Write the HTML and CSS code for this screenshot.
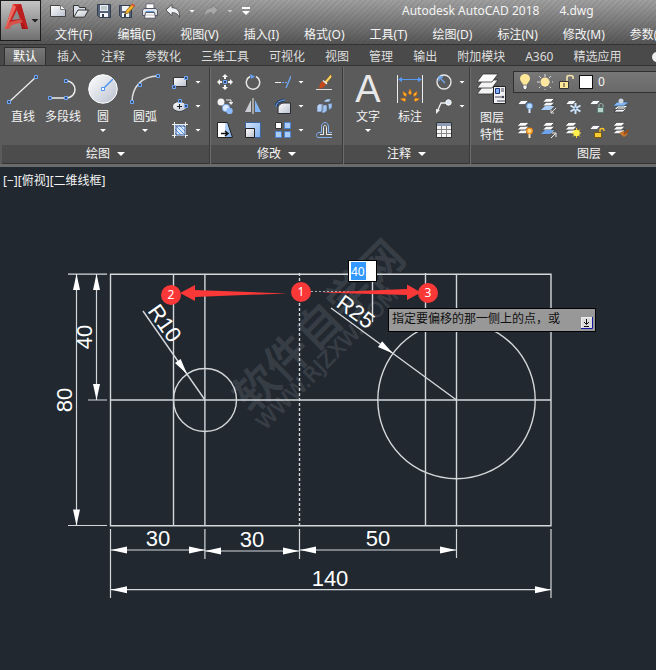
FILE: index.html
```html
<!DOCTYPE html>
<html lang="zh-CN">
<head>
<meta charset="utf-8">
<title>Autodesk AutoCAD 2018 - 4.dwg</title>
<link rel="stylesheet" href="styles.css">
</head>
<body>
<svg class="defs" aria-hidden="true">
  <defs>
    <linearGradient id="steel" x1="0" y1="0" x2="1" y2="1"><stop offset="0" stop-color="#fff"/><stop offset="1" stop-color="#b9c0ce"/></linearGradient>
    <linearGradient id="sky" x1="0" y1="0" x2="1" y2="1"><stop offset="0" stop-color="#d6e6fa"/><stop offset="1" stop-color="#7fb0ee"/></linearGradient>
    <linearGradient id="crimson" x1="0" y1="0" x2="1" y2="1"><stop offset="0" stop-color="#e8342f"/><stop offset="1" stop-color="#9c1012"/></linearGradient>
    <symbol id="sheet" viewBox="0 0 12 5"><path d="M4 .5h7.500L8 4.500H.5z" fill="#f4f6f9" stroke="#333" stroke-width=".6"/></symbol>
    <symbol id="stack" viewBox="0 0 16 16"><path d="M5 9.500h9l-4 4H1z" fill="#f4f6f9" stroke="#333" stroke-width=".7"/><path d="M5 5.500h9l-4 4H1z" fill="#f4f6f9" stroke="#333" stroke-width=".7"/><path d="M5 1.500h9l-4 4H1z" fill="#fff" stroke="#333" stroke-width=".7"/></symbol>
    <symbol id="grip" viewBox="0 0 4 4"><path d="M.5.5h3v3h-3z" fill="#3d4c66" stroke="#6fa8ff"/></symbol>
  </defs>
</svg>

<header class="titlebar">
  <button class="app" aria-label="应用程序菜单">
    <svg width="24" height="28" viewBox="0 0 24 28"><path d="M8 1h8l7 25h-6l-2-7-10 2-1 5H0z" fill="url(#crimson)"/><path d="M8 1l3 3-9 20-2 2z" fill="#ef6a60"/><path d="M12 7l3 9-8 1z" fill="#8c8c8c"/><path d="M0 26l5-7 12-3 2 3-12 3-3 4z" fill="#d5534b"/><path d="M16 1l7 25-3-1L11 4z" fill="#bb1f20"/></svg>
    <i class="caret dark"></i>
  </button>
  <div class="bars">
    <div class="quick">
      <button aria-label="新建"><svg width="16" height="16"><path d="M.5 2.500h10l5 4v7H.5z" fill="url(#steel)" stroke="#444"/><path d="M10.500 2.500v4h5" fill="#fff" stroke="#777"/></svg></button>
      <button aria-label="打开"><svg width="16" height="16"><path d="M.5 14V2.500h5l1 2h6V7" fill="#dce2eb" stroke="#333"/><path d="M.8 14.200L5 7h10.500l-4 7.200z" fill="url(#steel)" stroke="#333"/></svg></button>
      <button aria-label="保存"><svg width="16" height="16"><path d="M1.500 1.500h13v13h-11l-2-2z" fill="#56627a" stroke="#333e50"/><path d="M4 2h8v6H4z" fill="#e9edf4"/><path d="M5 4h6M5 6h6" stroke="#9aa"/><path d="M4 10h8v4H4z" fill="#f3f5f8"/><path d="M6 11h2v3H6z" fill="#333e50"/></svg></button>
      <button aria-label="另存为"><svg width="16" height="16"><path d="M.5 2.500h12v12h-10l-2-2z" fill="#56627a" stroke="#333e50"/><path d="M3 3h7v5H3zM3 10h7v4H3z" fill="#f0f3f7"/><path d="M5 11h2v3H5z" fill="#333e50"/><path d="M6 11l1-3 6-7 2.500 2-6 7z" fill="#f7b52c" stroke="#7b5011" stroke-width=".7"/><path d="M12 2l1.500-1.500L16 2.500 14.500 4z" fill="#dd5534"/></svg></button>
      <button aria-label="打印"><svg width="16" height="16"><path d="M4 6V.8h8V6z" fill="#fff" stroke="#667"/><path d="M2 5.500h12l1.500 2v5H.5v-5z" fill="#dfe4eb" stroke="#556"/><path d="M3.500 9.500h9l1 5.700h-11z" fill="#fff" stroke="#556"/><path d="M4 8.500h8" stroke="#5d9bdc"/><path d="M4 12h8" stroke="#bbb"/></svg></button>
      <button aria-label="放弃"><svg width="16" height="16"><path d="M.8 7L7 1.500v3.200c5 0 8 3 7.500 10-2-4.500-4-5-7.500-5v3.200z" fill="#eef1f5" stroke="#555"/></svg></button>
      <button aria-label="放弃列表"><i class="caret"></i></button>
      <button aria-label="重做"><svg width="16" height="16"><path d="M15.200 7L9 1.500v3.200c-5 0-8 3-7.500 10 2-4.500 4-5 7.500-5v3.200z" fill="#a8a8a8" stroke="#808080"/></svg></button>
      <button aria-label="重做列表"><i class="caret faint"></i></button>
      <button aria-label="自定义"><svg width="10" height="8"><path d="M1 1h8" stroke="#fff" stroke-width="2"/><path d="M1 4h8L5 8z" fill="#fff"/></svg></button>
      <h1><span>Autodesk AutoCAD 2018</span><span>4.dwg</span></h1>
    </div>
    <nav class="menu">
      <button>文件(F)</button><button>编辑(E)</button><button>视图(V)</button><button>插入(I)</button><button>格式(O)</button><button>工具(T)</button><button>绘图(D)</button><button>标注(N)</button><button>修改(M)</button><button>参数(P)</button>
    </nav>
  </div>
</header>

<nav class="tabs">
  <button class="active">默认</button><button>插入</button><button>注释</button><button>参数化</button><button>三维工具</button><button>可视化</button><button>视图</button><button>管理</button><button>输出</button><button>附加模块</button><button>A360</button><button>精选应用</button>
  <button class="more" aria-label="显示选项"><i></i></button>
</nav>

<main class="ribbon">
  <section class="panel">
    <div class="body">
      <button class="big"><svg width="32" height="32"><path d="M2 29L29 4" stroke="#eee" stroke-width="1.300"/><use href="#grip" x="0" y="27" width="4" height="4"/><use href="#grip" x="27" y="2" width="4" height="4"/></svg><span>直线</span></button>
      <button class="big"><svg width="32" height="32"><path d="M3 25h16c12 0 12-17 0-17" fill="none" stroke="#eee" stroke-width="1.500"/><use href="#grip" x="1" y="23" width="4" height="4"/><use href="#grip" x="17" y="23" width="4" height="4"/><use href="#grip" x="17" y="6" width="4" height="4"/></svg><span>多段线</span></button>
      <button class="big"><svg width="32" height="32"><circle cx="16" cy="16" r="14.300" fill="url(#steel)" stroke="#fff"/><path d="M16 16L26 6" stroke="#4d94f2" stroke-width="1.500"/><path d="M14.500 14.500h3v3h-3z" fill="#fff" stroke="#4d94f2"/></svg><span>圆</span><i class="caret"></i></button>
      <button class="big wide"><svg width="32" height="32"><path d="M3 29C3 14 13 3 29 3" fill="none" stroke="#ddd" stroke-width="1.500"/><use href="#grip" x="1" y="27" width="4" height="4"/><use href="#grip" x="9" y="10" width="4" height="4"/><use href="#grip" x="27" y="1" width="4" height="4"/></svg><span>圆弧</span><i class="caret"></i></button>
      <div class="tools">
        <button aria-label="矩形"><svg width="16" height="16"><path d="M1.500 3.500h13v9h-13z" fill="url(#steel)" stroke="#333"/><use href="#grip" x="0" y="11" width="4" height="4"/><use href="#grip" x="12" y="2" width="4" height="4"/></svg><i class="caret"></i></button>
        <button aria-label="椭圆"><svg width="16" height="16"><ellipse cx="7.500" cy="8.500" rx="7" ry="5" fill="url(#steel)" stroke="#444"/><path d="M5 8.500h5M7.500 6v5" stroke="#222"/><use href="#grip" x="6" y="1" width="4" height="4"/><use href="#grip" x="12" y="6" width="4" height="4"/></svg><i class="caret"></i></button>
        <button aria-label="图案填充"><svg width="16" height="16"><path d="M3 3h10v10H3z" fill="#d9e7fb"/><path d="M3 7l6 6M3 3l10 10M7 3l6 6M3 11l2 2M11 3l2 2" stroke="#5c97eb"/><path d="M2.500 0v16M13.500 0v16M0 2.500h16M0 13.500h16" stroke="#eee"/><path d="M4 4h9v9H4z" fill="none" stroke="#3c5a91"/></svg><i class="caret"></i></button>
      </div>
    </div>
    <h2>绘图<i class="caret large"></i></h2>
  </section>

  <section class="panel">
    <div class="body">
      <div class="tools modify">
        <button aria-label="移动"><svg width="16" height="16"><path d="M8 0l3 3H9v2H7V3H5zM8 16l3-3H9v-2H7v2H5zM0 8l3-3v2h2v2H3v2zM16 8l-3-3v2h-2v2h2v2z" fill="#f4f4f4"/><path d="M6.500 6.500h3v3h-3z" fill="#346" stroke="#6fa8ff"/></svg></button>
        <button aria-label="旋转"><svg width="16" height="16"><path d="M5 2.500a6.700 6.700 0 1 0 6 0" fill="none" stroke="#e5e5e5" stroke-width="1.500"/><path d="M5 0l5 2.500L6 5z" fill="#66a2f5"/></svg></button>
        <button aria-label="修剪"><svg width="16" height="16"><path d="M0 8.500h6" stroke="#eee"/><path d="M7 8.500h5" stroke="#70a8f5" stroke-dasharray="2 1"/><path d="M11 14L16 2" stroke="#70a8f5" stroke-width="1.300"/></svg><i class="caret"></i></button>
        <button aria-label="删除"><svg width="16" height="16"><path d="M0 15.500h16" stroke="#ddd"/><path d="M8 8l7-8 1 3-6 7z" fill="#f8d264" stroke="#63451d" stroke-width=".6"/><path d="M6 7l4 3-2 3-5 2 1-5z" fill="#c74818"/><path d="M7 6.500l4 3.500" stroke="#eee" stroke-width="1.500"/></svg></button>
        <button aria-label="复制"><svg width="16" height="16"><circle cx="4" cy="4" r="3.500" fill="#f4f4f4"/><circle cx="9" cy="10" r="3.700" fill="#dcebff" stroke="#76a5e3"/><circle cx="12.500" cy="13" r="3.200" fill="#8cbafa"/><path d="M9 2h5v3" fill="none" stroke="#eee"/><path d="M11.500 4h5L14 7z" fill="#eee"/></svg></button>
        <button aria-label="镜像"><svg width="16" height="16"><path d="M6 2v12H0z" fill="#c9ccd2"/><path d="M10 2v12h6z" fill="#82b3f2"/><path d="M8 0v16" stroke="#eee"/></svg></button>
        <button aria-label="圆角"><svg width="16" height="16"><path d="M3 15.500V11c0-4 3-6 6-6h6.500v10.500z" fill="url(#steel)" stroke="#292d35"/><path d="M1 9c0-4 4-7 9-7" fill="none" stroke="#283f64" stroke-width="3"/><path d="M1 9c0-4 4-7 9-7" fill="none" stroke="#75aef8"/></svg><i class="caret"></i></button>
        <button aria-label="分解"><svg width="16" height="16"><path d="M1 8l2-2h4v6l-2 2H1zM8 3l3-2h4l-2 3H8zM6 7h5v6l-3 2H6zM12 6l4-1v5l-3 2z" fill="url(#sky)" stroke="#55606f" stroke-width=".6"/></svg></button>
        <button aria-label="拉伸"><svg width="16" height="16"><path d="M.5.5h10l5 15H.5z" fill="url(#sky)" stroke="#222"/><path d="M1 1h7v14H1z" fill="#fff"/><path d="M4 11.500h6M8 9l3 2.500L8 14" fill="none" stroke="#111" stroke-width="1.500"/></svg></button>
        <button aria-label="缩放"><svg width="16" height="16"><path d="M.5.5h15v15H.5z" fill="url(#sky)" stroke="#3b66a5"/><path d="M.5 6.500h9v9h-9z" fill="url(#steel)" stroke="#222"/></svg></button>
        <button aria-label="阵列"><svg width="16" height="16"><path d="M.5.5h6v6h-6z" fill="#fff" stroke="#333"/><path d="M9.500.5h6v6h-6zM.5 9.500h6v6h-6zM9.500 9.500h6v6h-6z" fill="#a9ccfa" stroke="#4c83d0"/></svg><i class="caret"></i></button>
        <button aria-label="偏移"><svg width="16" height="16"><path d="M16 15.500H2c-2 0-2-5 1-5h2.500V5c0-6 7-6 7 0v5.500H16" fill="none" stroke="#81b2f6"/><path d="M16 12.500h-5.500V5.500c0-3-3-3-3 0v7H4" fill="none" stroke="#eee"/></svg></button>
      </div>
    </div>
    <h2>修改<i class="caret large"></i></h2>
  </section>

  <section class="panel annotate">
    <div class="body">
      <button class="big text"><span class="glyph">A</span><span>文字</span><i class="caret"></i></button>
      <button class="big text"><svg width="32" height="32"><path d="M3.500 2v28M28.500 2v28" stroke="#eee"/><path d="M5 6.500h22" stroke="#579af2"/><path d="M4 6.500L8 4v5zM28 6.500L24 4v5z" fill="#579af2"/><g fill="#ffb925" stroke="#dd6f17" stroke-width=".7"><path d="M16 16l1.500 4-1.500 2-1.500-2zM9 18.500l3.500 2.500-.5 2.500-2.500-1.500zM23 18.500L19.500 21l.5 2.500 2.500-1.500zM6.500 26l4-1 1.500 2-1.500 1.500zM25.500 26l-4-1-1.500 2 1.500 1.500z"/></g></svg><span>标注</span></button>
      <div class="tools">
        <button aria-label="直径"><svg width="16" height="16"><circle cx="8" cy="8" r="7" fill="none" stroke="#e8e8e8" stroke-width="1.400"/><path d="M3 3l6 6M3 7V3h4" fill="none" stroke="#70aaf7" stroke-width="1.300"/></svg><i class="caret"></i></button>
        <button aria-label="引线"><svg width="16" height="16"><path d="M1 14L5 5h6" fill="none" stroke="#eee" stroke-width="1.300"/><path d="M0 16v-5l4 1z" fill="#eee"/><circle cx="12.500" cy="4.500" r="2.700" fill="#dbe5f2" stroke="#fff"/></svg><i class="caret"></i></button>
        <button aria-label="表格"><svg width="16" height="16"><path d="M.5.5h15v15H.5z" fill="#f5f5f5" stroke="#333"/><path d="M1 1h14v3H1z" fill="#8d9cb5"/><path d="M1 7.500h14M1 11.500h14M5.500 4v11M10.500 4v11" stroke="#888"/></svg></button>
      </div>
    </div>
    <h2>注释<i class="caret large"></i></h2>
  </section>

  <section class="panel layers">
    <div class="body">
      <button class="big text"><svg width="32" height="32"><g fill="#f4f4f4" stroke="#333" stroke-width=".8"><path d="M7 13h15l-6 8H1z"/><path d="M7 7h15l-6 8H1z"/><path d="M7 1h15l-6 8H1z" fill="#fff"/></g><path d="M17.500 13.500h12v17h-12z" fill="#f0f2f5" stroke="#222"/><path d="M19.500 15.500h4v5h-4z" fill="#7fb2f7" stroke="#237"/><path d="M25 16h3M25 18h3M19 24h8M21 28h8" stroke="#445"/><circle cx="27" cy="24" r="1.200" fill="#445"/></svg><span>图层<br>特性</span></button>
      <div class="layer-tools">
        <button class="layer-select" aria-label="当前图层">
          <svg width="14" height="18"><path d="M5 12C5 10 2 8.500 2 5.500a5 4.500 0 0 1 10 0C12 8.500 9 10 9 12z" fill="#ffe798"/><path d="M5 12h4v3l-2 2-2-2z" fill="#f5f5f5" stroke="#555" stroke-width=".7"/></svg>
          <svg width="16" height="16"><path d="M8 0v16M0 8h16M2 2l12 12M14 2L2 14" stroke="#ddd" stroke-dasharray="3 2"/><circle cx="8" cy="8" r="4.500" fill="#ffe7a1"/></svg>
          <svg width="16" height="16"><path d="M9 7V3c0-2 6-2 6 0v2" fill="none" stroke="#f6e7ae" stroke-width="1.600"/><path d="M1.500 7.500h9v7h-9z" fill="#ffe798" stroke="#333"/><path d="M6 9v4" stroke="#333"/></svg>
          <i class="swatch"></i><span>0</span>
        </button>
        <div class="layer-grid">
          <button aria-label="关闭"><svg width="16" height="16"><use href="#sheet" y="2" width="12" height="5"/><circle cx="12.500" cy="8" r="3" fill="#b9d9ff" stroke="#5e94d5"/><path d="M12.500 11v4" stroke="#d9e9ff" stroke-width="2"/></svg></button>
          <button aria-label="隔离"><svg width="16" height="16"><use href="#stack" y="-1" width="16" height="15"/><path d="M4 8h9l-4 4H0z" fill="#a9cef9"/><path d="M15 10l-5 5M10 12v3h3" fill="none" stroke="#ddd"/></svg></button>
          <button aria-label="冻结"><svg width="16" height="16"><use href="#sheet" y="2" width="12" height="5"/><path d="M10.500 5v11M5.500 7.500l10 6M15.500 7.500l-10 6" stroke="#cfe5ff" stroke-width="2"/><circle cx="10.500" cy="10.500" r="1" fill="#467"/></svg></button>
          <button aria-label="锁定"><svg width="16" height="16"><use href="#sheet" y="2" width="12" height="5"/><path d="M10 10V7c0-2 4-2 4 0v3" fill="none" stroke="#9fbdb5"/><path d="M8.500 9.500h6v5h-6z" fill="#b7d2cb" stroke="#597d74"/></svg></button>
          <button aria-label="置为当前"><svg width="16" height="16"><path d="M5 10h9l-4 4H1zM5 7.500h10l-4 4H1z" fill="#f4f6f9" stroke="#333" stroke-width=".7"/><path d="M4 4h12l-5 4H0z" fill="#83b5f6" stroke="#335566" stroke-width=".7"/><circle cx="8" cy="3" r="2.500" fill="#cfd6df"/></svg></button>
          <button aria-label="打开所有图层"><svg width="16" height="16"><use href="#stack" x="-1" y="-1" width="15" height="15"/><circle cx="12.500" cy="9" r="2.800" fill="#ffd67a" stroke="#ef8a18" stroke-width="1.300"/><path d="M12.500 12v4" stroke="#ffe7c5" stroke-width="2"/></svg></button>
          <button aria-label="取消隔离"><svg width="16" height="16"><use href="#stack" y="-1" width="16" height="15"/><path d="M4 8h9l-4 4H0z" fill="#6da3ee"/><path d="M10 16l5-5M11 11h4v4" fill="none" stroke="#eee"/></svg></button>
          <button aria-label="解冻"><svg width="16" height="16"><use href="#stack" x="-1" y="-1" width="15" height="15"/><path d="M11.500 6v10M6.500 11h10M8 7.500l7 7M15 7.500l-7 7" stroke="#ffd229"/><circle cx="11.500" cy="11" r="3.200" fill="#fff04e"/></svg></button>
          <button aria-label="解锁"><svg width="16" height="16"><use href="#sheet" y="3" width="12" height="5"/><path d="M11 11V8c0-2 4-2 4 0v1" fill="none" stroke="#f6c329" stroke-width="1.400"/><path d="M5.500 10.500h7v5h-7z" fill="#f9cb37" stroke="#79590a"/></svg></button>
          <button aria-label="匹配图层"><svg width="16" height="16"><use href="#stack" x="-1" y="-1" width="15" height="15"/><path d="M6 11l5 4 4-3-5-3z" fill="#c8772c"/><path d="M11 12l5-4" stroke="#9a4d15" stroke-width="2"/></svg></button>
        </div>
      </div>
    </div>
    <h2>图层<i class="caret large"></i></h2>
  </section>
</main>

<section class="canvas">
  <p class="viewport">[−][俯视][二维线框]</p>
  <svg class="drawing" width="656" height="503" viewBox="0 167 656 503">
    <defs>
      <path id="head" d="M0 0l-16-3.500v7z" fill="#fff"/>
    </defs>
    <g class="watermark">
      <text class="site" transform="translate(252 415) rotate(-45)">软件自学网</text>
      <text class="url" transform="translate(265 431) rotate(-45)">WWW.RJZXW.COM</text>
    </g>
    <g class="geometry">
      <path d="M110.500 274.200H551V525.700H110.500zM173.500 274v251M204.900 274v251M425.500 273v252M456.500 274v251M110 400H551"/>
      <path d="M299.500 273v252" stroke-dasharray="3 2"/>
      <circle cx="205" cy="400" r="31.500"/>
      <circle cx="456.500" cy="400" r="78.700"/>
      <path d="M372.500 260v62"/>
      <path d="M143 311L205 400M331 308L456.500 400"/>
    </g>
    <g class="dimension">
      <path d="M68 274.200h39M68 525.500h39M88 400h19M76.500 274v251M96.500 274v126"/>
      <path d="M110.500 529v69M204.900 529v30M299.500 529v30M456.500 529v29M551 529v69"/>
      <path d="M110 550h95M205 551h94M299 550h157M110 589.700h441"/>
      <use href="#head" transform="translate(76.500 274) rotate(-90)"/><use href="#head" transform="translate(96.500 274) rotate(-90)"/>
      <use href="#head" transform="translate(76.500 525.500) rotate(90)"/><use href="#head" transform="translate(96.500 400) rotate(90)"/>
      <use href="#head" transform="translate(111 550) rotate(180)"/><use href="#head" transform="translate(205 550)"/>
      <use href="#head" transform="translate(205 551) rotate(180)"/><use href="#head" transform="translate(299 551)"/>
      <use href="#head" transform="translate(300 550) rotate(180)"/><use href="#head" transform="translate(456 550)"/>
      <use href="#head" transform="translate(111 589.700) rotate(180)"/><use href="#head" transform="translate(551 589.700)"/>
      <use href="#head" transform="translate(187 374) rotate(55)"/><use href="#head" transform="translate(393 353.500) rotate(36)"/>
    </g>
    <g class="values">
      <text x="158" y="546">30</text><text x="252" y="547">30</text><text x="378" y="546">50</text><text x="330" y="586">140</text>
      <text transform="translate(92 337) rotate(-90)">40</text><text transform="translate(72 400) rotate(-90)">80</text>
      <text class="radius" transform="translate(147 311) rotate(55)">R10</text><text class="radius" transform="translate(335 306) rotate(36)">R25</text>
    </g>
    <path d="M303 291.500h48" stroke="#aaa" stroke-dasharray="2 2"/>
    <g class="callout">
      <path d="M180 293l15-8v5l92 3.400L195 297v4z"/><path d="M421 292.500l-14-8v4.500l-86 3.500 86 2.500v5z"/>
      <circle cx="301" cy="292" r="10"/><circle cx="171" cy="295" r="10"/><circle cx="428" cy="293" r="10"/>
      <text x="301" y="296">1</text><text x="171" y="299">2</text><text x="428" y="297">3</text>
    </g>
  </svg>
  <input class="distance" type="text" value="40" aria-label="偏移距离">
  <div class="prompt"><span>指定要偏移的那一侧上的点，或</span><svg width="12" height="12"><path d="M.5.5h11v11H.5z" fill="#ddd" stroke="#eee"/><path d="M0 11.500h11.500V0" fill="none" stroke="#1616a0"/><path d="M5.500 2v5M3 5l2.500 2.500L8 5M3 9.500h5" fill="none" stroke="#111"/></svg></div>
</section>
</body>
</html>
```
FILE: styles.css
```css
* { box-sizing: border-box; }

body {
  margin: 0;
  min-height: 100vh;
  display: flex;
  flex-direction: column;
  overflow: hidden;
  background: #212830;
  color: #f4f4f4;
  font: 12px/16px "Noto Sans", "Noto Sans CJK SC", sans-serif;
}

button {
  flex: none;
  padding: 0;
  border: 0;
  background: none;
  color: inherit;
  font: inherit;
  white-space: nowrap;
}

svg { display: block; flex: none; }
.defs { position: absolute; width: 0; height: 0; }

.caret {
  display: block;
  flex: none;
  width: 6px;
  height: 3px;
  background: #fff;
  clip-path: polygon(0 0, 100% 0, 50% 100%);
}
.caret.large { width: 8px; height: 4px; }
.caret.dark { width: 8px; height: 4px; background: #222; }
.caret.faint { background: #ccc; }

/* Title bar */
.titlebar {
  display: flex;
  height: 45px;
  border-bottom: 1px solid #333;
  background:
    repeating-linear-gradient(135deg, transparent 0 2px, rgba(0, 0, 0, .05) 2px 4px),
    linear-gradient(#a0a0a0, #555);
}
.app {
  display: flex;
  align-items: center;
  gap: 2px;
  width: 41px;
  height: 41px;
  padding: 0 2px 8px 4px;
  border: 1px solid #1c1c1c;
  background: linear-gradient(#c4c4c4, #707070);
}
.app .caret { margin-top: 8px; }
.bars { flex: 1; min-width: 0; padding-left: 9px; overflow: hidden; }
.quick { display: flex; align-items: center; gap: 7px; height: 22px; }
.quick button { min-width: 8px; }
.quick .caret { margin: 0 auto; }
.quick h1 {
  display: flex;
  flex: none;
  gap: 20px;
  margin: 0 0 0 144px;
  font-size: 12px;
  font-weight: 400;
}
.menu { display: flex; gap: 25px; height: 22px; padding: 3px 0 0 5px; }
.menu button { height: 20px; }

/* Tabs */
.tabs {
  display: flex;
  height: 21px;
  padding: 2px 0 0 4px;
  overflow: hidden;
  background: #4a4a4a;
  border-bottom: 1px solid #333;
  color: #ddd;
}
.tabs button { height: 19px; padding: 0 10px; }
.tabs .active {
  padding: 0 8px;
  margin-right: 1px;
  border: 1px solid #303030;
  border-bottom: 0;
  background: linear-gradient(#777, #606060);
  color: #fff;
}
.tabs .more { padding-left: 21px; }
.more i { display: block; width: 12px; height: 10px; border-radius: 5px; background: #eee; }

/* Ribbon */
.ribbon {
  display: flex;
  height: 101px;
  padding: 1px 0 0 2px;
  overflow: hidden;
  background: #5b5b5b;
  border-bottom: 3px solid #6b6b6b;
}
.panel {
  display: flex;
  flex: none;
  flex-direction: column;
  height: 97px;
  border-right: 1px solid #3a3a3a;
  border-bottom: 1px solid #333;
  box-shadow: 1px 0 #6d6d6d;
}
.panel + .panel { margin-left: 1px; }
.panel h2 {
  display: flex;
  align-items: center;
  justify-content: center;
  gap: 7px;
  height: 18px;
  margin: 0;
  background: #4c4c4c;
  font-size: 12px;
  font-weight: 400;
}
.body { display: flex; height: 78px; padding: 0 8px 0 1px; }
.big {
  display: flex;
  flex-direction: column;
  align-items: center;
  gap: 4px;
  min-width: 40px;
  padding: 6px 1px 0;
}
.big.wide { min-width: 44px; }
.big.text { min-width: 42px; }
.glyph { height: 32px; color: #e8e8e8; font: 38px/32px "Liberation Sans", sans-serif; }
.tools {
  display: grid;
  grid-template-rows: repeat(3, 24px);
  padding: 3px 0 0 5px;
}
.tools button { display: flex; align-items: center; gap: 7px; }
.modify { grid-template-columns: 28px 30px 41px 18px; }
.annotate .body { padding: 0 4px 0 3px; }

.layers { flex: 1 0 252px; }
.layers .body { padding: 0; }
.layers .big span { line-height: 17px; }
.layer-tools { flex: 1; padding-top: 4px; }
.layer-select {
  display: flex;
  align-items: center;
  gap: 5px;
  width: 100%;
  height: 22px;
  padding-left: 4px;
  border: 1px solid #303030;
  background: linear-gradient(#777, #696969);
}
.swatch { width: 14px; height: 14px; border: 1px solid #111; background: #fff; }
.layer-grid {
  display: grid;
  grid-template-columns: repeat(5, 24px);
  grid-auto-rows: 24px;
  align-items: center;
  padding: 1px 0 0 4px;
}

/* Drawing area */
.canvas { position: relative; flex: 1; min-height: 503px; background: #212830; }
.viewport { position: absolute; top: 6px; left: 3px; margin: 0; }
.geometry { fill: none; stroke: #d4d7da; stroke-width: 1.4px; }
.dimension { stroke: #d4d7da; stroke-width: 1.2px; fill: none; }
.dimension use { stroke: none; }
.values { fill: #fff; font: 22px "Liberation Sans", sans-serif; text-anchor: middle; }
.values .radius { text-anchor: start; }
.watermark { fill: #373d45; stroke: #3c424a; stroke-width: .5px; }
.site { font: 500 44px "Noto Sans CJK SC", sans-serif; }
.url { font: 21px "DejaVu Sans", sans-serif; }
.callout { fill: #fb3838; }
.callout text { fill: #fff; font: 12px "Noto Sans", sans-serif; text-anchor: middle; }

.distance {
  position: absolute;
  top: 93px;
  left: 348px;
  width: 29px;
  height: 22px;
  padding: 0 2px;
  border: 1px solid #000;
  border-radius: 0;
  background: linear-gradient(#3399ff, #3399ff) 2px 1px / 15px 18px no-repeat #fff;
  color: #fff;
  font: inherit;
}
.prompt {
  position: absolute;
  top: 141px;
  left: 388px;
  display: flex;
  justify-content: space-between;
  width: 208px;
  height: 24px;
  padding: 2px 2px 2px 3px;
  border: 1px solid #000;
  background: #989898;
  color: #111;
}
.prompt svg { align-self: flex-end; }
```
